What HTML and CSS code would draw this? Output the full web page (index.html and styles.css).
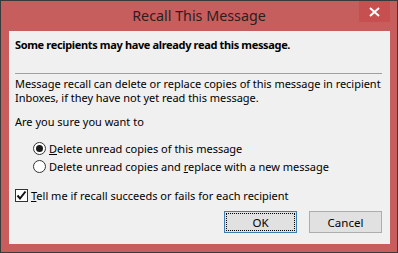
FILE: index.html
```html
<!DOCTYPE html>
<html>
<head>
  <title>Recall This Message</title>
  <meta name="viewport" content="width=device-width, initial-scale=1.0">
  <link rel="stylesheet" href="styles.css">
</head>
<body>
  <div class="window">
    <div class="titlebar">
      <div></div>
      <div class="title">Recall This Message</div>
      <div class="controls">
        <div class="close">
          <svg width="11" height="10" viewBox="0 0 11 10">
            <path d="M1 1 L10 9 M10 1 L1 9" stroke="#fff" stroke-width="2"/>
          </svg>
        </div>
      </div>
    </div>

    <div class="client">
      <div class="warning">Some recipients may have already read this message.</div>
      <div class="separator"></div>
      <p class="info">Message recall can delete or replace copies of this message in recipient<br>Inboxes, if they have not yet read this message.</p>
      <p class="question">Are you sure you want to</p>

      <div class="options">
        <label class="option">
          <span class="radio checked"></span>
          <span><u>D</u>elete unread copies of this message</span>
        </label>
        <label class="option">
          <span class="radio"></span>
          <span>Delete unread copies and <u>r</u>eplace with a new message</span>
        </label>
      </div>

      <label class="check-row">
        <span class="checkbox">
          <svg width="11" height="11" viewBox="0 0 11 11">
            <path d="M1.5 5.5 L4 8.5 L9.5 1.5" fill="none" stroke="#111" stroke-width="2"/>
          </svg>
        </span>
        <span><u>T</u>ell me if recall succeeds or fails for each recipient</span>
      </label>

      <div class="buttons">
        <button class="btn default"><span class="focus">OK</span></button>
        <button class="btn">Cancel</button>
      </div>
    </div>
  </div>
</body>
</html>
```

FILE: styles.css
```css
* {
  box-sizing: border-box;
}

body {
  margin: 0;
  padding: 0;
  font-family: "Noto Sans", "Liberation Sans", sans-serif;
  font-size: 11px;
  color: #000;
}

.window {
  width: 398px;
  height: 253px;
  border: 1px solid #3a3a3a;
  background-color: #c75e5e;
  display: flex;
  flex-direction: column;
  padding: 0 7px 8px 8px;
}

.titlebar {
  height: 30px;
  display: grid;
  grid-template-columns: 1fr auto 1fr;
  margin: 0 -7px 0 -8px;
}

.title {
  font-size: 14.3px;
  color: #2e1d1d;
  line-height: 30px;
}

.controls {
  display: flex;
  justify-content: flex-end;
  align-items: flex-start;
  padding-right: 7px;
}

.close {
  width: 31px;
  height: 21px;
  background-color: #c84f4f;
  display: flex;
  align-items: center;
  justify-content: center;
}

.client {
  flex: 1;
  background-color: #f0f0f0;
  padding: 6px 8px 0 6px;
  line-height: 13px;
}

.warning {
  font-weight: bold;
  letter-spacing: -0.35px;
  padding-top: 1px;
}

.separator {
  height: 1px;
  background-color: #a0a0a0;
  margin: 22px 0 0 0;
}

.info {
  margin: 3px 0 0 0;
  line-height: 14px;
  white-space: nowrap;
  letter-spacing: -0.03px;
}

.question {
  margin: 10px 0 0 0;
}

.options {
  display: flex;
  flex-direction: column;
  gap: 5px;
  margin: 14px 0 0 18px;
}

.option,
.check-row {
  display: flex;
  align-items: center;
}

.radio {
  width: 13px;
  height: 13px;
  border: 1px solid #333;
  border-radius: 50%;
  background-color: #fff;
  margin-right: 3px;
  display: flex;
  align-items: center;
  justify-content: center;
}

.radio.checked::after {
  content: "";
  width: 7px;
  height: 7px;
  border-radius: 50%;
  background-color: #1a1a1a;
}

.check-row {
  margin-top: 16px;
}

.checkbox {
  width: 13px;
  height: 13px;
  border: 1px solid #333;
  background-color: #fff;
  margin-right: 3px;
  display: flex;
  align-items: center;
  justify-content: center;
}

.buttons {
  display: flex;
  justify-content: flex-end;
  gap: 12px;
  margin-top: 9px;
}

.btn {
  width: 73px;
  height: 22px;
  border: 1px solid #adadad;
  background-color: #e1e1e1;
  font-family: inherit;
  font-size: 11.5px;
  color: #000;
  padding: 1px;
  display: flex;
  align-items: center;
  justify-content: center;
}

.btn.default {
  border-color: #3c7fb1;
}

.focus {
  width: 100%;
  height: 100%;
  border: 1px dotted #000;
  display: flex;
  align-items: center;
  justify-content: center;
}
```
